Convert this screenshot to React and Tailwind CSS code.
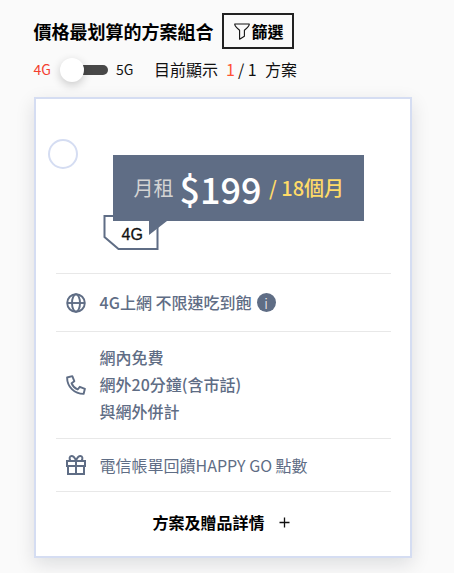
import clsx from "clsx";

const GlobeIcon = () => (
  <svg width="20" height="20" viewBox="0 0 20 20" fill="none" stroke="currentColor" strokeWidth="1.9">
    <circle cx="10" cy="10" r="8.8" />
    <ellipse cx="10" cy="10" rx="4" ry="8.8" />
    <path d="M1.2 10h17.6" />
  </svg>
);

const PhoneIcon = () => (
  <svg width="20" height="20" viewBox="0 0 20 20" fill="none" stroke="currentColor" strokeWidth="1.9" strokeLinejoin="round">
    <path d="M1.1 2.5 6.3 1.1 8.3 6.2 5.6 8.3C6.7 11 8.8 13.2 11.7 14.5L13.8 11.8 18.9 13.8 17.6 18.9C8.3 18.9 1.1 11.7 1.1 2.5Z" />
  </svg>
);

const GiftIcon = () => (
  <svg width="20" height="20" viewBox="0 0 20 20" fill="none" stroke="currentColor" strokeWidth="2">
    <path d="M1 6h18v5H1zM2 11v8h16v-8M10 6v13" />
    <path d="M10 5.500C8.800 2.500 7.200 1 5.500 1 3.300 1 3.200 4 4.300 5.500M10 5.500C11.200 2.500 12.800 1 14.500 1c2.200 0 2.300 3 1.200 4.500" />
  </svg>
);

const FilterIcon = () => (
  <svg width="16" height="17" viewBox="0 0 16 17" fill="none" stroke="#111" strokeWidth="1.1" strokeLinejoin="round">
    <path d="M.7 1h14.6c0 2-1 3.200-4.900 6.200v6.100l-4.800 2.900V7.200C1.700 4.200.7 3 .7 1Z" />
  </svg>
);

const FeatureRow = ({ icon, className, children }) => (
  <div className={clsx("flex items-center border-t border-[#e8e8e8] pl-[10px] text-[16px] leading-[27px] text-[#5f6d85]", className)}>
    <span className="w-[33.600px] shrink-0">{icon}</span>
    <div>{children}</div>
  </div>
);

export default function App() {
  return (
    <div className="h-[573px] w-[454px] overflow-hidden bg-[#fafafa] pl-[34px] pt-[13px] font-['Noto_Sans_CJK_TC',sans-serif] text-[#111]">
      <div className="flex h-9 items-center">
        <h1 className="-ml-[0.6px] w-[188.6px] text-[18px] font-bold leading-9 text-black">價格最划算的方案組合</h1>
        <button className="flex h-9 w-[72px] items-center border-2 border-[#222] pl-[10px] text-[16px] font-bold text-black">
          <FilterIcon />
          <span className="ml-[1.4px]">篩選</span>
        </button>
      </div>

      <div className="flex h-[40px] items-center">
        <span className="-ml-[0.5px] w-[27.5px] text-[14px] text-[#f4402f]">4G</span>
        <div className="mt-[2px] flex h-[10px] w-[47px] items-center rounded-full bg-[#484848]">
          <span className="-ml-px h-6 w-6 shrink-0 rounded-full bg-white shadow-[0_3px_10px_rgba(0,0,0,0.2)]" />
        </div>
        <span className="ml-2 w-[38px] text-[14px]">5G</span>
        <div className="flex text-[16px]">
          <span className="w-[72px]">目前顯示</span>
          <span className="w-[12px] text-[#ff5234]">1</span>
          <span className="w-[27px]">/ 1</span>
          <span>方案</span>
        </div>
      </div>

      <div className="mt-2 h-[461px] w-[378px] border-2 border-[#d5ddf2] bg-white pl-5 pr-[19px] shadow-[0_6px_18px_rgba(0,20,30,0.12)]">
        <div className="flex h-[174px] pt-10">
          <button aria-label="選擇方案" className="-ml-2 h-[30px] w-[30px] rounded-full border-2 border-[#d5ddf2]" />
          <div className="relative ml-[25px] mt-4">
            <svg className="absolute left-0 top-[60px]" width="56" height="36" viewBox="0 0 56 36" fill="none" stroke="#5f6d85" strokeWidth="2">
              <path d="M1.500 1h53v33H15.500L1.500 22Z" />
            </svg>
            <span className="absolute left-[18.6px] top-[68px] font-['Liberation_Sans',sans-serif] text-[16px] leading-6 [-webkit-text-stroke:0.3px_#111]">4G</span>
            <div className="relative ml-[10px] flex h-[66px] w-[251px] items-center bg-[#5f6d85] pl-[20.4px]">
              <span className="w-[46px] pb-px text-[20px] text-[#d4d4d4]">月租</span>
              <span className="w-[89.6px] pb-px text-[36px] font-medium text-white">$199</span>
              <span className="whitespace-nowrap pb-px text-[20px] font-medium text-[#ffdb68]">/ 18個月</span>
              <svg className="absolute left-[36px] top-[66px]" width="19" height="15" viewBox="0 0 19 15" fill="#5f6d85">
                <path d="M0 0h18L0 14Z" />
              </svg>
            </div>
          </div>
        </div>

        <FeatureRow icon={<GlobeIcon />} className="h-[58px] font-medium">
          <span className="flex items-center">
            4G上網 不限速吃到飽
            <span className="ml-[5px] flex h-[19px] w-[19px] items-center justify-center rounded-full bg-[#5f6d85] text-[14px] font-light leading-none text-white">i</span>
          </span>
        </FeatureRow>
        <FeatureRow icon={<PhoneIcon />} className="h-[107px] pb-px font-medium">
          <p>網內免費</p>
          <p>網外20分鐘(含市話)</p>
          <p>與網外併計</p>
        </FeatureRow>
        <FeatureRow icon={<GiftIcon />} className="h-[53px]">電信帳單回饋HAPPY GO 點數</FeatureRow>

        <button className="flex h-[64px] w-full items-center border-t border-[#e8e8e8] pb-[3px] pl-[96.500px] text-[16px] font-bold text-black">
          方案及贈品詳情
          <svg className="ml-[14px]" width="11" height="11" viewBox="0 0 11 11" stroke="#111" strokeWidth="1.3">
            <path d="M5.500.5v10M.5 5.500h10" />
          </svg>
        </button>
      </div>
    </div>
  );
}
